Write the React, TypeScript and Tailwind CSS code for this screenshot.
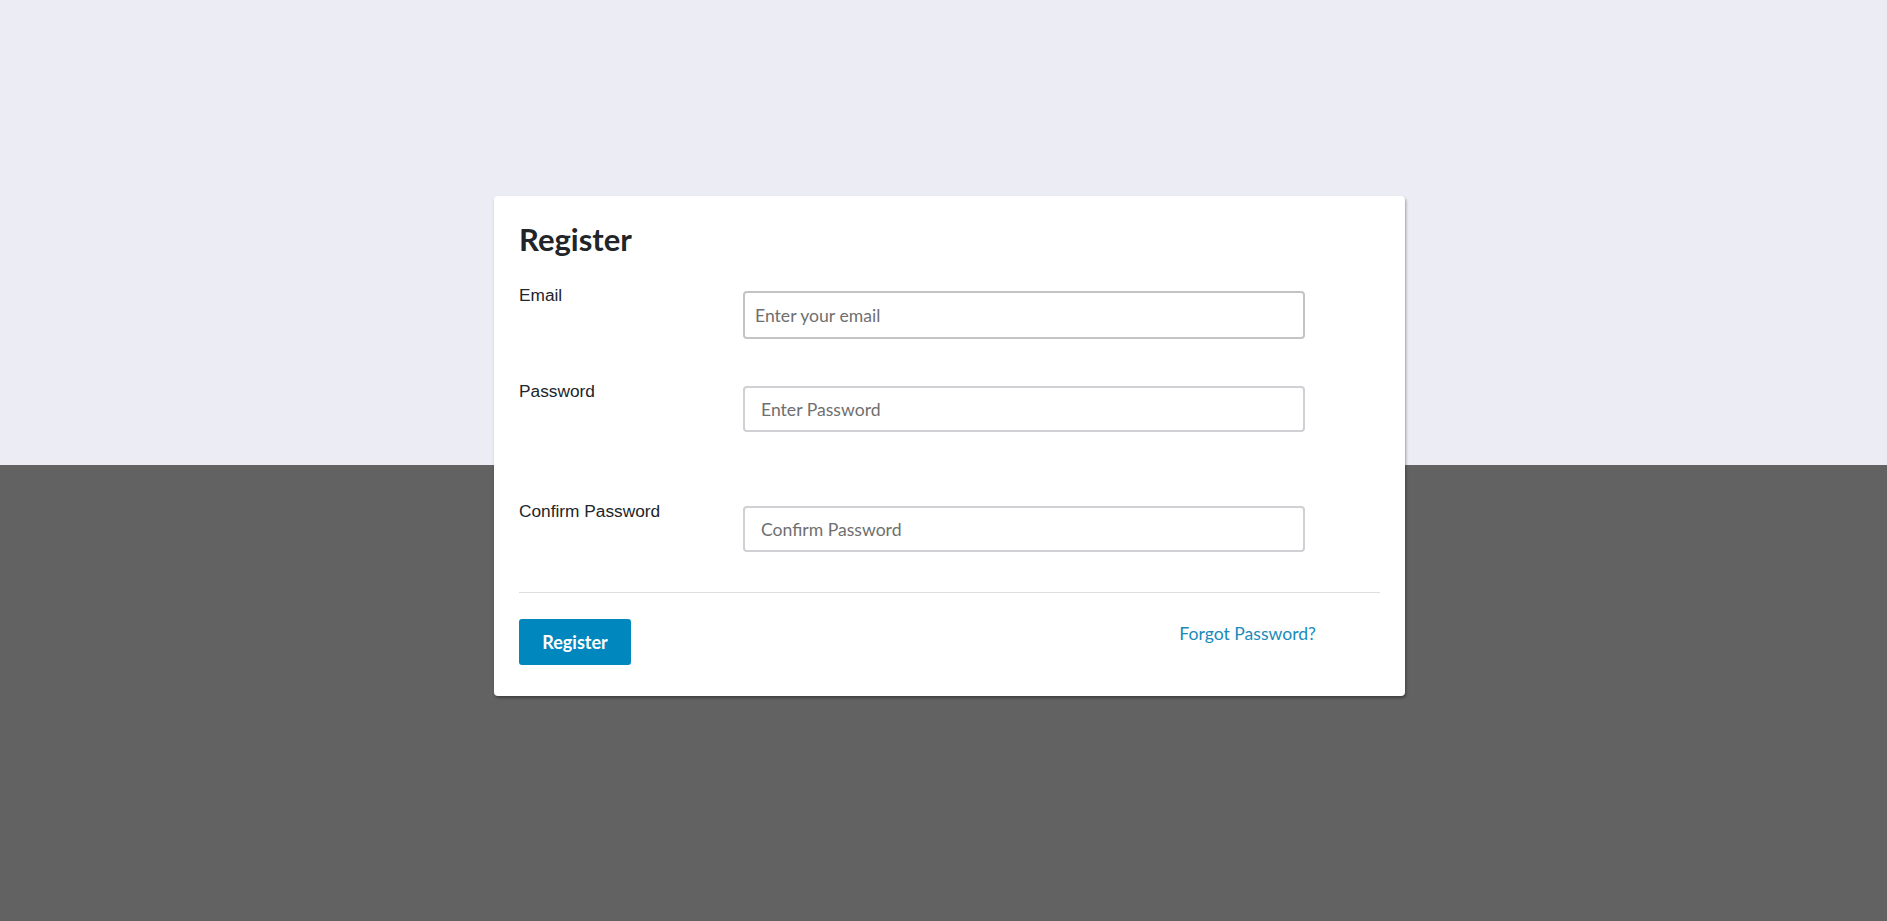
import React from "react";

const seg = { fontFamily: 'Lato, "Open Sans", sans-serif' };

export default function App() {
  return (
    <div className="relative w-full h-[921px] overflow-hidden">
      <div className="flex flex-col h-full">
        <div className="h-[465px] bg-[#ececf4]" />
        <div className="flex-1 bg-[#636263]" />
      </div>
      <div className="absolute inset-0 flex justify-center pt-[196px]">
        <div className="w-[911px] h-[500px] ml-[12px] bg-white rounded-[4px] shadow-[1px_2px_3px_rgba(0,0,0,0.35)] px-[25px] pt-[23px]">
          <h1 className="text-[31px] leading-[40px] font-bold text-[#212529]" style={seg}>Register</h1>
          <div className="flex mt-[31px] h-[48px]">
            <label className="w-[224px] text-[17.3px] leading-[20px] text-[#212529] font-['Liberation_Sans',Arial,sans-serif] -mt-[5px]">Email</label>
            <input
              placeholder="Enter your email"
              className="mt-[1px] w-[562px] h-[48px] border-2 border-[#c4c4c4] rounded-[4px] px-[10px] text-[17.6px] placeholder:text-[#6f6f6f] outline-none"
              style={seg}
            />
          </div>
          <div className="flex mt-[48px] h-[46px]">
            <label className="w-[224px] text-[17.3px] leading-[20px] text-[#212529] font-['Liberation_Sans',Arial,sans-serif] -mt-[5px]">Password</label>
            <input
              placeholder="Enter Password"
              type="password"
              className="w-[562px] h-[46px] border-2 border-[#d0d0d4] rounded-[4px] px-[16px] text-[17.6px] placeholder:text-[#6f6f6f] outline-none"
              style={seg}
            />
          </div>
          <div className="flex mt-[74px] h-[46px]">
            <label className="w-[224px] text-[17.3px] leading-[20px] text-[#212529] font-['Liberation_Sans',Arial,sans-serif] -mt-[5px]">Confirm Password</label>
            <input
              placeholder="Confirm Password"
              type="password"
              className="w-[562px] h-[46px] border-2 border-[#d0d0d4] rounded-[4px] px-[16px] text-[17.6px] placeholder:text-[#6f6f6f] outline-none"
              style={seg}
            />
          </div>
          <div className="mt-[40px] h-px bg-[#dedede]" />
          <div className="flex justify-between items-start mt-[26px]">
            <button
              className="w-[112px] h-[46px] bg-[#0087bd] rounded-[3px] text-white text-[18px] font-bold"
              style={seg}
            >
              Register
            </button>
            <a className="mt-[2px] mr-[64px] text-[17.6px] text-[#1a8bb9] leading-[26px]" style={seg}>
              Forgot Password?
            </a>
          </div>
        </div>
      </div>
    </div>
  );
}
